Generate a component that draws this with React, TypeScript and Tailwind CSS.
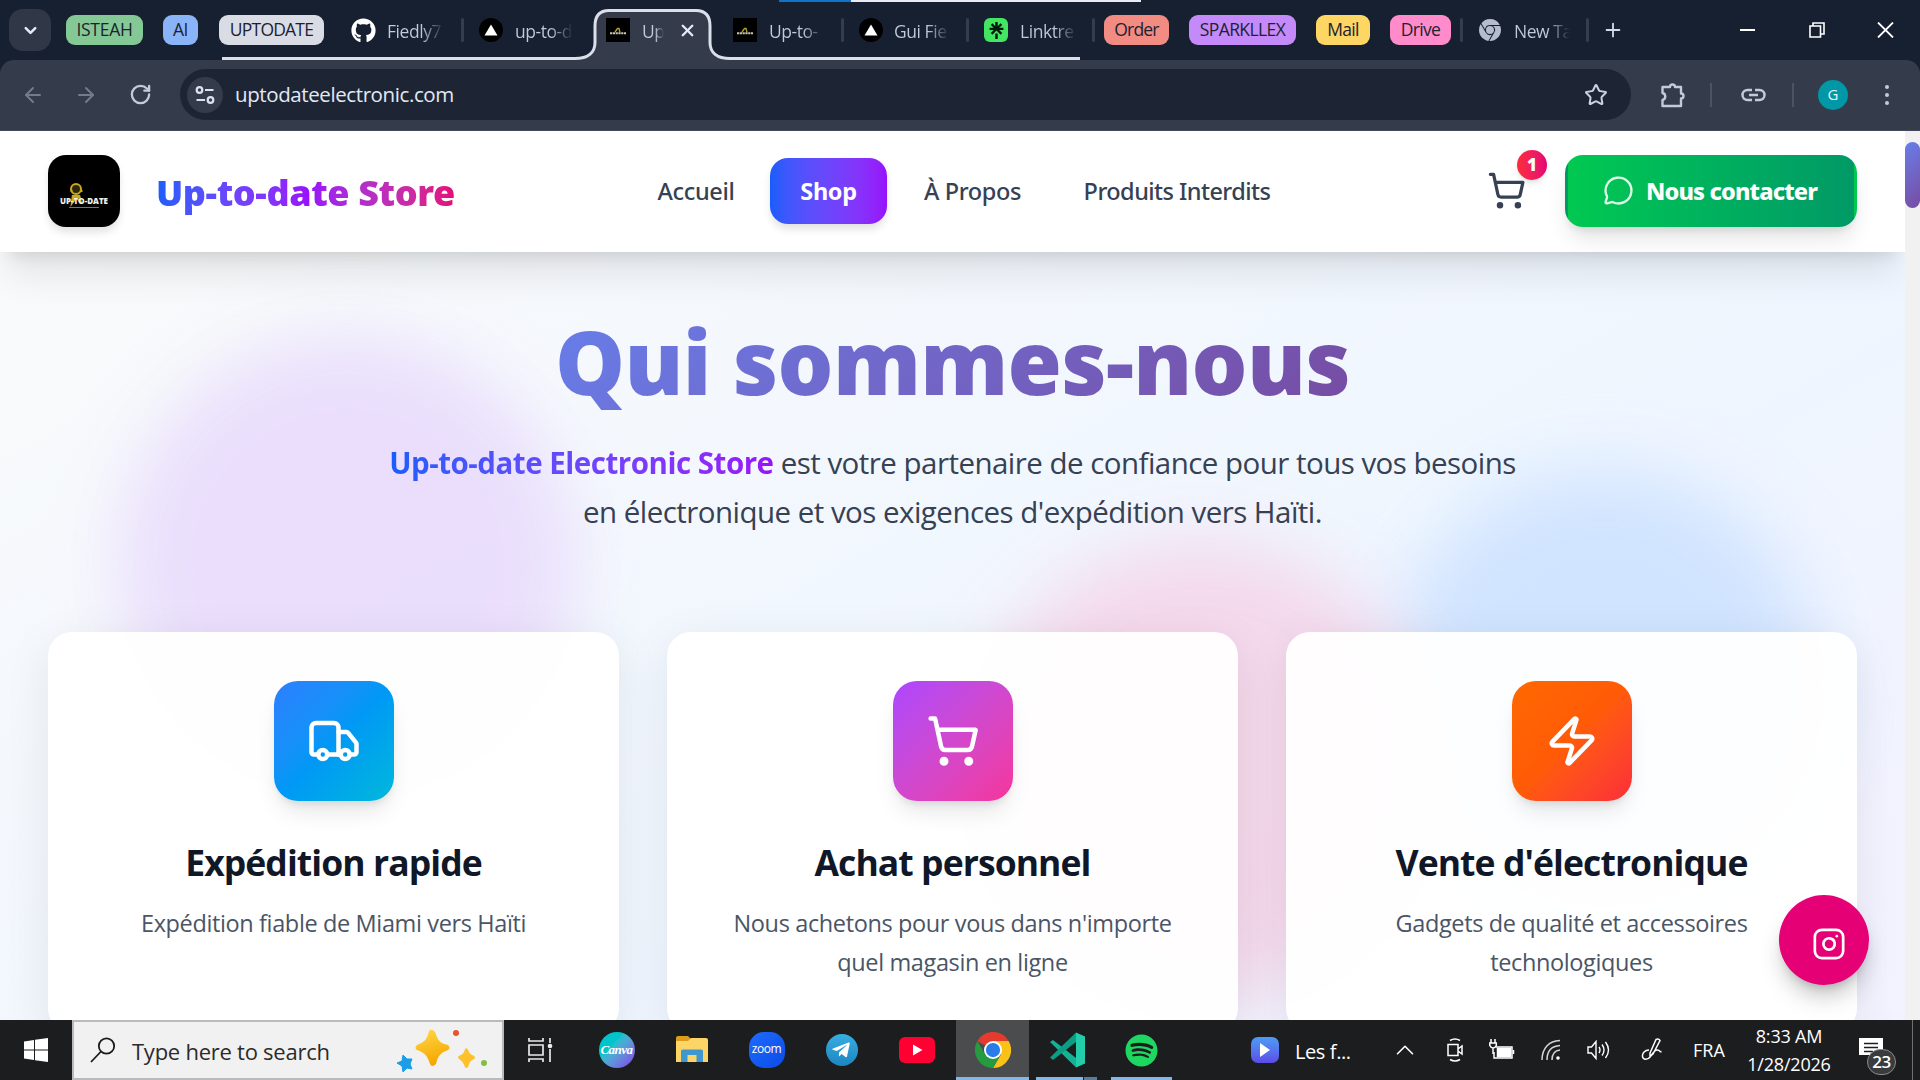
import React from 'react';
import {
  ArrowLeft, ArrowRight, ChevronDown, ChevronUp, Instagram, MessageCircle,
  Plus, RotateCw, ShoppingCart, Star, Truck, X, Zap,
} from 'lucide-react';
import { FaGithub, FaSpotify, FaTelegramPlane } from 'react-icons/fa';
import { SiGooglechrome, SiLinktree } from 'react-icons/si';

interface Feature {
  title: string;
  lines: string[];
  icon: React.ReactNode;
  tile: string;
}

const FEATURES: Feature[] = [
  {
    title: 'Expédition rapide',
    lines: ['Expédition fiable de Miami vers Haïti'],
    icon: <Truck size={54} />,
    tile: 'bg-linear-to-br from-[#2b7fff] via-[#0098f5] to-[#00b8db]',
  },
  {
    title: 'Achat personnel',
    lines: ["Nous achetons pour vous dans n'importe", 'quel magasin en ligne'],
    icon: <ShoppingCart size={54} />,
    tile: 'bg-linear-to-br from-[#ad46ff] to-[#f6339a]',
  },
  {
    title: "Vente d'électronique",
    lines: ['Gadgets de qualité et accessoires', 'technologiques'],
    icon: <Zap size={54} />,
    tile: 'bg-linear-to-br from-[#ff6900] via-[#ff5a08] to-[#fb2c36]',
  },
];

/* ---------- Browser tab strip ---------- */

const Group = ({ className, children }: { className: string; children: React.ReactNode }) => (
  <div className={`h-[30px] rounded-[9px] flex items-center justify-center shrink-0 text-[17.5px] pb-0.5 text-[#1c2230] ${className}`}>
    {children}
  </div>
);

const TabTitle = ({ className, children }: { className: string; children: React.ReactNode }) => (
  <span className={`overflow-hidden whitespace-nowrap shrink-0 text-[17.5px] tracking-[-0.45px] pt-0.5 bg-linear-to-r from-[#c3cadb] from-60% to-[#c3cadb00] bg-clip-text text-transparent ${className}`}>
    {children}
  </span>
);

const Separator = ({ className }: { className: string }) => (
  <div className={`w-[3px] h-6 rounded bg-[#343c4d] shrink-0 ${className}`} />
);

const VercelIcon = ({ className }: { className: string }) => (
  <div className={`w-6 h-6 rounded-full bg-black flex items-center justify-center shrink-0 ${className}`}>
    <svg width="14" height="12" viewBox="0 0 14 12"><path d="M7 0.5 13.5 11.5H0.5z" fill="#fff" /></svg>
  </div>
);

const StoreFavicon = ({ className }: { className: string }) => (
  <div className={`w-6 h-6 bg-black shrink-0 ${className}`}>
    <svg width="24" height="24" viewBox="0 0 24 24" fill="none">
      <path d="M9 14 11.500 10.500l1.500 0 1 4" stroke="#b3a22b" strokeWidth="1.300" />
      <path d="M4 15.200h16" stroke="#c9c5b0" strokeWidth="2" strokeDasharray="2.2 0.6" />
    </svg>
  </div>
);

const TabStrip = () => (
  <div className="relative h-[60px] bg-[#172030]">
    {/* Active tab shape and the group underline running through it */}
    <svg className="absolute left-0 top-0" width="1920" height="62" viewBox="0 0 1920 62" fill="none">
      <path d="M577 60c12-1 18-6 18-17V26q0-15.5 14-15.5h87q14 0 14 15.5v17c0 11 6 16 18 17z" fill="#343b4b" />
      <path d="M222 58.5h353c13 0 20-6 20-16V26q0-15.5 14-15.5h87q14 0 14 15.5v16.500c0 10 7 16 20 16h350" stroke="#dcdfea" strokeWidth="3" />
    </svg>
    <div className="absolute left-[779px] top-0 w-[72px] h-0.5 bg-[#0f73cc]" />
    <div className="absolute left-[851px] top-0 w-[290px] h-0.5 bg-[#e9ebf2]" />

    <div className="relative flex items-center h-[60px] pl-[9px]">
      <div className="w-[42px] h-[42px] rounded-[14px] bg-[#303848] flex items-center justify-center text-[#e6eaf4] shrink-0">
        <ChevronDown size={19} strokeWidth={3.2} />
      </div>
      <Group className="w-[77px] ml-[15px] bg-[#84c995] tracking-[-0.3px]">ISTEAH</Group>
      <Group className="w-[35px] ml-5 bg-[#8ab4f8] tracking-[-0.6px]">AI</Group>
      <Group className="w-[105px] ml-[21px] bg-[#dadce5] tracking-[-0.8px]">UPTODATE</Group>
      <FaGithub size={25} className="text-white ml-[27px] shrink-0" />
      <TabTitle className="w-[57px] ml-[11px]">Fiedly7</TabTitle>
      <Separator className="ml-[17px]" />
      <VercelIcon className="ml-[15px]" />
      <TabTitle className="w-[58px] ml-3">up-to-d</TabTitle>
      <StoreFavicon className="ml-[33px]" />
      <TabTitle className="w-[22px] ml-3">Up</TabTitle>
      <X size={19} strokeWidth={3} className="text-[#e6eaf4] ml-[14px] shrink-0" />
      <StoreFavicon className="ml-[36px]" />
      <TabTitle className="w-[56px] ml-3">Up-to-</TabTitle>
      <Separator className="ml-4" />
      <VercelIcon className="ml-[15px]" />
      <TabTitle className="w-[56px] ml-[11px]">Gui Fie</TabTitle>
      <Separator className="ml-4" />
      <div className="w-6 h-6 rounded-md bg-[#43e660] flex items-center justify-center ml-[15px] shrink-0">
        <SiLinktree size={17} className="text-[#06180b]" />
      </div>
      <TabTitle className="w-[57px] ml-3">Linktre</TabTitle>
      <Separator className="ml-[15px]" />
      <Group className="w-[65px] ml-[9px] bg-[#f28b82] tracking-[-0.8px]">Order</Group>
      <Group className="w-[107px] ml-5 bg-[#c58af9] tracking-[-0.6px]">SPARKLLEX</Group>
      <Group className="w-[54px] ml-5 bg-[#fdd663] tracking-[-0.7px]">Mail</Group>
      <Group className="w-[61px] ml-5 bg-[#ff8bcb] tracking-[-0.7px]">Drive</Group>
      <Separator className="ml-[9px]" />
      <SiGooglechrome size={22} className="text-[#b4bccd] ml-4 shrink-0" />
      <TabTitle className="w-[56px] ml-[13px]">New Ta</TabTitle>
      <Separator className="ml-4" />
      <Plus size={22} className="text-[#d5dbea] ml-[13px] shrink-0" />
      <div className="w-[15px] h-0.5 bg-white ml-[116px] shrink-0" />
      <svg className="ml-[54px] shrink-0" width="16" height="16" viewBox="0 0 16 16" fill="none" stroke="#fff" strokeWidth="1.600">
        <path d="M1 4h10.500v11H1zM4 4V1h11v11h-3.500" />
      </svg>
      <svg className="ml-[52px] shrink-0" width="17" height="16" viewBox="0 0 17 16" stroke="#fff" strokeWidth="1.800">
        <path d="M1 .5 16 15.500M16 .5 1 15.500" />
      </svg>
    </div>
  </div>
);

/* ---------- Address bar ---------- */

const Toolbar = () => (
  <div className="bg-[#172030]">
    <div className="flex items-center h-[71px] bg-[#343b4b] rounded-t-[14px] pl-[21px] pb-px text-[#c3cadb] border-b border-[#41485a]">
      <ArrowLeft size={24} className="text-[#737b8d] shrink-0" />
      <ArrowRight size={24} className="text-[#737b8d] ml-[29px] shrink-0" />
      <RotateCw size={23} strokeWidth={2.4} className="ml-[31px] shrink-0" />
      <div className="flex items-center w-[1451px] h-[51px] ml-[28px] rounded-full bg-[#1d2535] shrink-0 pl-[7px] pr-[23px]">
        <div className="w-9 h-9 rounded-full bg-[#343b4b] flex items-center justify-center shrink-0">
          <svg width="20" height="20" viewBox="0 0 20 20" fill="none" stroke="#dbe1ee" strokeWidth="2.2">
            <circle cx="4.500" cy="5" r="2.800" />
            <path d="M10 5h8.500M1.500 15H10" />
            <circle cx="15.500" cy="15" r="2.800" />
          </svg>
        </div>
        <span className="ml-3 pb-px text-[20.500px] tracking-[-0.4px] text-[#e3e8f3]">uptodateelectronic.com</span>
        <Star size={24} className="ml-auto text-[#c9d1e2]" />
      </div>
      <svg className="ml-[29px] shrink-0" width="26" height="26" viewBox="0 0 26 26" fill="none" stroke="currentColor" strokeWidth="2.400" strokeLinejoin="round">
        <path d="M2.500 5h7.500a2.500 2.500 0 0 1 5 0H21v6.500a2.500 2.500 0 0 1 0 5V24H2.500v-6a3.600 3.600 0 0 0 0-7z" />
      </svg>
      <div className="w-0.5 h-6 bg-[#4b5365] ml-[24px] shrink-0" />
      <svg className="ml-[29px] shrink-0" width="25" height="14" viewBox="0 0 25 14" fill="none" stroke="currentColor" strokeWidth="2.500">
        <path d="M11 2H6.500a5 5 0 0 0 0 10H11M14 2h4.500a5 5 0 0 1 0 10H14M8 7h9" />
      </svg>
      <div className="w-0.5 h-6 bg-[#4b5365] ml-[26px] shrink-0" />
      <div className="w-[30px] h-[30px] rounded-full bg-[#0097a7] text-[#e4f6f8] text-[15px] flex items-center justify-center ml-[24px] shrink-0">G</div>
      <div className="flex flex-col gap-1 ml-[37px] shrink-0">
        <div className="w-1 h-1 rounded-full bg-[#c3cadb]" />
        <div className="w-1 h-1 rounded-full bg-[#c3cadb]" />
        <div className="w-1 h-1 rounded-full bg-[#c3cadb]" />
      </div>
    </div>
  </div>
);

/* ---------- Site ---------- */

const StoreLogo = () => (
  <div className="w-[72px] h-[72px] rounded-[18px] bg-black shadow-[0_6px_9px_-1px_rgba(0,0,0,0.12)] shrink-0 overflow-hidden">
    <svg width="72" height="72" viewBox="0 0 72 72">
      <circle cx="28" cy="34" r="5" fill="#2d2609" stroke="#c9a91c" strokeWidth="2" />
      <path d="M22.500 36h2M32 36h2.500M25 40l-1 8 3-4M31 40l2 8-3-4" stroke="#c9a91c" strokeWidth="2.200" fill="none" />
      <path d="M25 40h6l1 3h-8z" fill="#c9a91c" />
      <text x="12" y="49" fontFamily="Open Sans, sans-serif" fontSize="9.500" fontWeight="800" fill="#f2efe4" textLength="48" lengthAdjust="spacingAndGlyphs">UP-TO-DATE</text>
      <path d="M21 52.500h30" stroke="#8d7a1f" strokeWidth="1" />
    </svg>
  </div>
);

const Header = () => (
  <header className="relative z-10 flex items-center h-[121px] bg-white px-12 pb-0.5 shadow-[0_30px_37px_-8px_rgba(0,0,0,0.09),0_12px_15px_-9px_rgba(0,0,0,0.1)]">
    <div className="flex items-center w-[586px] shrink-0">
      <StoreLogo />
      <span className="ml-9 pt-1 pr-1 font-['Noto_Sans',sans-serif] font-black text-[36px] tracking-[-0.4px] leading-[48px] whitespace-nowrap bg-linear-to-r from-[#155dfc] via-[#9810fa] to-[#e60076] bg-clip-text text-transparent">
        Up-to-date Store
      </span>
    </div>
    <nav className="flex items-center gap-3 font-['Noto_Sans',sans-serif] text-[23.500px] font-medium tracking-[-0.35px] text-[#364153] whitespace-nowrap">
      <a className="w-[124px] text-center pt-0.5">Accueil</a>
      <a className="w-[117px] h-[66px] flex items-center justify-center rounded-[18px] bg-linear-to-r from-[#155dfc] to-[#9810fa] text-white font-bold pt-0.5 shadow-[0_6px_9px_-1px_rgba(0,0,0,0.12)]">
        Shop
      </a>
      <a className="w-[147px] text-center pt-0.5">À Propos</a>
      <a className="w-[238px] text-center tracking-[-0.55px] pt-0.5">Produits Interdits</a>
    </nav>
    <button className="relative ml-auto mr-[39px] text-[#364153] shrink-0">
      <ShoppingCart size={39} strokeWidth={2} />
      <span className="absolute -top-[21px] left-[30px] w-[30px] h-[30px] rounded-full bg-linear-to-r from-[#fb2c36] to-[#e60076] text-white text-[17px] font-extrabold flex items-center justify-center shadow-md">1</span>
    </button>
    <button className="flex items-center w-[292px] h-[72px] rounded-[18px] border-[3px] border-transparent bg-linear-to-r from-[#00c950] to-[#009966] bg-repeat text-white shrink-0 shadow-[0_15px_23px_-5px_rgba(0,0,0,0.12),0_6px_9px_-4px_rgba(0,0,0,0.1)]">
      <MessageCircle size={31} strokeWidth={1.8} className="ml-[35px] text-[#dffbe9]" />
      <span className="ml-3 pt-0.5 font-['Noto_Sans',sans-serif] font-extrabold text-[23.500px] tracking-[-0.85px] whitespace-nowrap">Nous contacter</span>
    </button>
  </header>
);

const FeatureCard: React.FC<{ feature: Feature }> = ({ feature }) => (
  <div className="h-[400px] rounded-3xl bg-white/95 flex flex-col items-center pt-[49px] text-center shadow-[0_12px_48px_rgba(0,0,0,0.08)]">
    <div className={`w-[120px] h-[120px] rounded-3xl flex items-center justify-center text-white shadow-[0_15px_23px_-5px_rgba(0,0,0,0.1),0_6px_9px_-4px_rgba(0,0,0,0.1)] ${feature.tile}`}>
      {feature.icon}
    </div>
    <h3 className="mt-[34px] text-[35.500px] leading-[54px] font-bold tracking-[-0.92px] text-[#101828]">{feature.title}</h3>
    <p className="mt-[15px] text-[23.500px] leading-[39px] tracking-[-0.37px] text-[#4a5565]">
      {feature.lines.map(line => (
        <span key={line} className="block whitespace-nowrap">{line}</span>
      ))}
    </p>
  </div>
);

const Hero = () => (
  <section className="relative h-[1100px] bg-linear-to-br from-[#f9fafb] via-[#eff6ff] to-[#f5f0ff] px-12">
    {/* Soft colour blobs behind the copy */}
    <div className="absolute left-[119px] top-[85px] w-[456px] h-[456px] rounded-full bg-[#e9dcfc] opacity-90 blur-[34px]" />
    <div className="absolute left-[1390px] top-[218px] w-[428px] h-[428px] rounded-full bg-[#cbe1ff] opacity-85 blur-[36px]" />
    <div className="absolute left-[973px] top-[290px] w-[456px] h-[456px] rounded-full bg-[#f5d3e8] opacity-85 blur-[36px]" />

    <div className="relative flex flex-col items-center pt-[49px]">
      <h1 className="px-1 font-['Noto_Sans',sans-serif] font-black text-[88px] leading-[120px] tracking-[-0.7px] whitespace-nowrap bg-linear-135 from-[#667eea] to-[#764ba2] bg-clip-text text-transparent">
        Qui sommes-nous
      </h1>
      <p className="mt-[17px] text-[29.500px] leading-[49px] tracking-[-0.53px] text-center text-[#364153]">
        <span className="block whitespace-nowrap">
          <strong className="font-bold tracking-[-0.48px] bg-linear-to-r from-[#155dfc] to-[#9810fa] bg-clip-text text-transparent">Up-to-date Electronic Store</strong>
          {' '}est votre partenaire de confiance pour tous vos besoins
        </span>
        <span className="block whitespace-nowrap">en électronique et vos exigences d'expédition vers Haïti.</span>
      </p>
    </div>

    <div className="relative grid grid-cols-3 gap-12 mt-[96px]">
      {FEATURES.map(feature => <FeatureCard key={feature.title} feature={feature} />)}
    </div>
  </section>
);

/* ---------- Windows taskbar ---------- */

const AppSlot = ({ className = '', children }: { className?: string; children: React.ReactNode }) => (
  <div className={`relative w-[75px] h-full flex items-center justify-center shrink-0 ${className}`}>{children}</div>
);

const Sparkles = () => (
  <svg width="94" height="46" viewBox="0 0 94 46">
    <defs>
      <linearGradient id="gold" x1="0" y1="0" x2="0.3" y2="1">
        <stop offset="0" stopColor="#ffd94a" />
        <stop offset="1" stopColor="#f5a800" />
      </linearGradient>
    </defs>
    <path d="M37 3q3-3 6 1c3 9 5 11 13 13q3 3 0 5c-8 3-10 6-12 14q-4 4-6 0c-3-9-5-11-13-14q-3-2 0-5c8-3 10-6 12-14z" fill="url(#gold)" transform="translate(-4 0)" />
    <path d="M69 21q2-2 3 1c2 4 2 4 6 6q2 2 0 3c-4 2-4 3-6 8q-2 2-3 0c-2-5-3-6-6-8q-2-2 0-3c4-2 5-3 6-7z" fill="#fcc12b" />
    <path d="M7 27l4 4 5 0-2 5 2 5-5-1-4 4-1-6-5-3 5-2z" fill="#1b9de8" stroke="#1b9de8" strokeLinejoin="round" />
    <circle cx="60" cy="5" r="3" fill="#e8532b" />
    <circle cx="88" cy="35" r="3" fill="#84bd45" />
  </svg>
);

const Taskbar = () => (
  <footer className="relative z-20 flex items-center h-[60px] bg-[#1c1d1f] text-white shrink-0">
    <div className="w-[72px] flex justify-center shrink-0">
      <svg width="24" height="24" viewBox="0 0 24 24" fill="#fff">
        <path d="M0 3.400 10 2v9.500H0zM11 1.800 24 0v11.500H11zM0 12.500h10V22L0 20.600zM11 12.500h13V24l-13-1.800z" />
      </svg>
    </div>
    <div className="flex items-center w-[432px] h-full bg-[#f1f1f1] border-2 border-[#b9babb] shrink-0 pl-4">
      <svg width="26" height="26" viewBox="0 0 26 26" fill="none" stroke="#1a1a1a" strokeWidth="1.800">
        <circle cx="16.500" cy="9" r="7.700" />
        <path d="M11 14.500 1 25" />
      </svg>
      <span className="ml-[16px] mt-0.5 text-[22px] tracking-[-0.25px] text-[#2b2b2b] whitespace-nowrap">Type here to search</span>
      <div className="ml-auto mr-[12px] pt-0.5"><Sparkles /></div>
    </div>
    <AppSlot className="!w-[72px]">
      <svg width="26" height="26" viewBox="0 0 26 26" fill="none" stroke="#e9e9e9" strokeWidth="1.700">
        <path d="M2 1v3h14V1M2 8h14v10H2zM2 25v-3h14v3M23 1v5M23 12v13" />
        <circle cx="23" cy="9" r="1.500" fill="#fff" />
      </svg>
    </AppSlot>
    <AppSlot className="ml-[3px]">
      <div className="w-9 h-9 rounded-full bg-linear-to-br from-[#00c4cc] from-35% to-[#7d2ae8] flex items-center justify-center font-['Liberation_Serif',serif] italic font-bold text-[13px] tracking-[-0.5px]">Canva</div>
    </AppSlot>
    <AppSlot>
      <svg width="32" height="28" viewBox="0 0 32 28">
        <path d="M0 2q0-2 2-2h10l3 3v4H0z" fill="#dd9d1b" />
        <path d="M0 5h12l3-3h15q2 0 2 2v22H0z" fill="#fcd566" />
        <path d="M5 26V15q0-1.500 2-1.500h18q2 0 2 1.500v11h-6.500v-7h-9v7z" fill="#3f97cf" />
      </svg>
    </AppSlot>
    <AppSlot>
      <div className="w-9 h-9 rounded-[15px] bg-linear-to-br from-[#1f6bff] to-[#0b4be6] flex items-center justify-center text-[12px] font-medium tracking-[-0.4px] pb-0.5">zoom</div>
    </AppSlot>
    <AppSlot>
      <div className="w-8 h-8 rounded-full bg-linear-to-b from-[#37aee2] to-[#1c86c0] flex items-center justify-center">
        <FaTelegramPlane size={20} className="mr-0.5" />
      </div>
    </AppSlot>
    <AppSlot>
      <svg width="36" height="26" viewBox="0 0 36 26">
        <rect width="36" height="26" rx="6" fill="#ff0033" />
        <path d="M14 7.500 23.500 13 14 18.500z" fill="#fff" />
      </svg>
    </AppSlot>
    <AppSlot className="!w-[73px] ml-0.5 bg-[#4b4c4e]">
      <svg width="36" height="36" viewBox="0 0 48 48">
        <path d="M24 24 3.200 12A24 24 0 0 1 44.800 12z" fill="#e33b2e" />
        <path d="M24 12h20.800A24 24 0 0 1 24 48l10.400-18z" fill="#fbc116" />
        <path d="M3.200 12 13.600 30 24 36l10.400-6L24 48A24 24 0 0 1 3.200 12z" fill="#249a41" />
        <circle cx="24" cy="24" r="12" fill="#fff" />
        <circle cx="24" cy="24" r="9.500" fill="#2a7de9" />
      </svg>
      <div className="absolute bottom-0 left-0 w-full h-[3px] bg-[#82b8e8]" />
    </AppSlot>
    <AppSlot>
      <svg width="36" height="36" viewBox="0 0 36 36">
        <path d="M1 10 4 8l23 18v9.500z" fill="#14b294" />
        <path d="M1 25.500 4 28l23-18V.5z" fill="#0d9c84" />
        <path d="M27 .5 36 4.500v27l-9 4z" fill="#24cdaa" />
      </svg>
      <div className="absolute bottom-0 left-[7px] w-[47px] h-[3px] bg-[#82b8e8]" />
      <div className="absolute bottom-0 left-[55px] w-[13px] h-[3px] bg-[#5b7d9b]" />
    </AppSlot>
    <AppSlot>
      <FaSpotify size={33} className="text-[#1ed760]" />
      <div className="absolute bottom-0 left-[7px] w-[61px] h-[3px] bg-[#82b8e8]" />
    </AppSlot>

    <div className="w-7 h-[26px] rounded-[7px] bg-linear-to-b from-[#4c9bf5] to-[#5b4be8] flex items-center justify-center ml-[72px] shrink-0">
      <svg width="10" height="14" viewBox="0 0 10 14"><path d="M0 0 10 7 0 14z" fill="#fff" /></svg>
    </div>
    <span className="ml-[16px] mt-1 w-[58px] text-[20px] tracking-[-0.4px] whitespace-nowrap shrink-0">Les f...</span>
    <ChevronUp size={30} strokeWidth={1.300} className="ml-[37px] shrink-0" />
    <svg className="ml-[26px] shrink-0" width="20" height="26" viewBox="0 0 20 26" fill="none" stroke="#fff" strokeWidth="1.500">
      <path d="M4 3.500Q9 .5 14 3.500M4 22.500q5 3 10 0M2 7.500h10v11H2zM12 12l4-3v8l-4-3" />
    </svg>
    <svg className="ml-[23px] shrink-0" width="26" height="24" viewBox="0 0 26 24" fill="none" stroke="#fff" strokeWidth="1.500">
      <path d="M7 9h16v11H5v-6" />
      <path d="M8.500 10.500h13v8h-13z" fill="#fff" />
      <path d="M24.500 12v4M2 1v4M6 1v4M.8 5h6.500v2.500q-1 2.500-3.200 2.500T.8 7.500zM4 10v6" />
    </svg>
    <svg className="ml-[26px] shrink-0" width="20" height="22" viewBox="0 0 20 22" fill="none" stroke="#d5d5d5" strokeWidth="1.500">
      <path d="M1 21C1 9 8 2 19 1.500M6 21C6 12 11 7 19 6.500M11 21c0-6 3-9.500 8-10" />
      <circle cx="17" cy="19" r="1.800" fill="#fff" stroke="none" />
    </svg>
    <svg className="ml-[26px] shrink-0" width="23" height="20" viewBox="0 0 23 20" fill="none" stroke="#fff" strokeWidth="1.400">
      <path d="M1 7h3.500L9 1.500v17L4.500 13H1zM12 7q2 3 0 6M15 4.500q4 5.500 0 11M18.500 2q6 8 0 16" />
    </svg>
    <svg className="ml-[31px] shrink-0" width="22" height="26" viewBox="0 0 22 26" fill="none" stroke="#fff" strokeWidth="1.500">
      <path d="M9 16 15 2.500q2.500-1.500 4 1L12 17l-3 2.500zM8 13c-4 0-7 3-6.500 6.500s5 4 8 0c2-3 4-7 7-6.500s2 2.500 4 1.500" />
    </svg>
    <span className="ml-[30px] text-[18px] w-[34px] shrink-0">FRA</span>
    <div className="flex flex-col items-center w-[90px] ml-[17px] text-[18px] leading-[28px] tracking-[-0.2px] shrink-0">
      <span>8:33 AM</span>
      <span>1/28/2026</span>
    </div>
    <div className="relative ml-[24px] w-[38px] h-[44px] shrink-0">
      <svg width="26" height="26" viewBox="0 0 26 26" className="mt-[9px]">
        <path d="M1 1h24v17H17v6l-6-6H1z" fill="#fff" />
        <path d="M6 6.500h14M6 10.500h14M6 14.500h9" stroke="#1c1d1f" strokeWidth="1.500" />
      </svg>
      <div className="absolute left-[9px] top-[21px] w-[29px] h-[26px] rounded-full bg-[#3a3b3d] border border-[#8c8c8c] text-[17px] font-semibold tracking-[-0.5px] flex items-center justify-center">23</div>
    </div>
    <div className="absolute right-[7px] top-0 w-px h-full bg-[#6f7072]" />
  </footer>
);

export default function App() {
  return (
    <div className="w-[1920px] h-[1080px] overflow-hidden flex flex-col font-['Open_Sans','Noto_Sans',sans-serif]">
      <TabStrip />
      <Toolbar />
      <main className="relative flex h-[889px] overflow-hidden shrink-0">
        <div className="w-[1905px] h-full overflow-hidden">
          <Header />
          <Hero />
        </div>
        <div className="relative z-10 w-[15px] h-full bg-[#f1f1f1] pt-[11px]">
          <div className="h-[66px] rounded-full bg-linear-135 from-[#667eea] to-[#764ba2]" />
        </div>
        {/* Floating Instagram shortcut */}
        <a className="absolute z-20 left-[1779px] top-[764px] w-[90px] h-[90px] rounded-full bg-[#e60076] text-white flex items-center justify-center pl-[9px] pt-2 shadow-[0_15px_23px_-5px_rgba(0,0,0,0.25),0_6px_9px_-4px_rgba(0,0,0,0.15)]">
          <Instagram size={34} strokeWidth={1.900} />
        </a>
      </main>
      <Taskbar />
    </div>
  );
}
